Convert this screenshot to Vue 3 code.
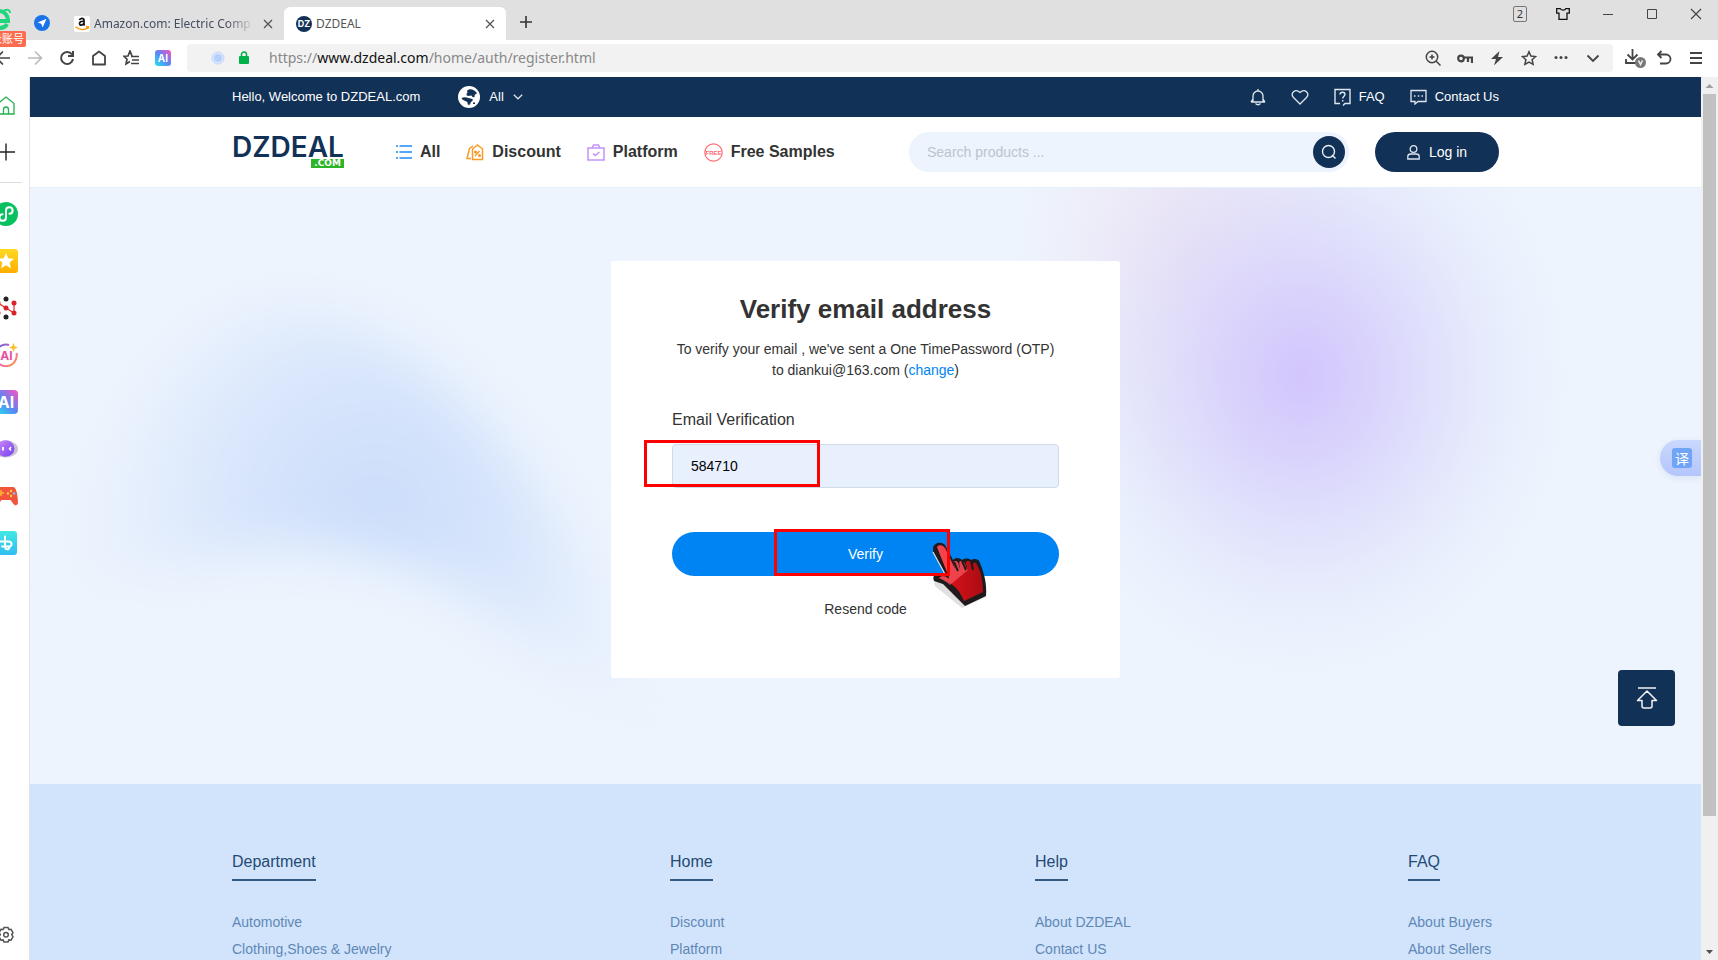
<script setup>
import { ref } from 'vue'

const code = ref('584710')
const search = ref('')
const address = { scheme: 'https://', host: 'www.dzdeal.com', path: '/home/auth/register.html' }
const columns = [
  { title: 'Department', links: ['Automotive', 'Clothing,Shoes & Jewelry'] },
  { title: 'Home', links: ['Discount', 'Platform'] },
  { title: 'Help', links: ['About DZDEAL', 'Contact US'] },
  { title: 'FAQ', links: ['About Buyers', 'About Sellers'] },
]
</script>

<template>
  <div class="browser">
    <header class="tabs">
      <div class="account">
        <svg class="account-logo" width="24" height="22" viewBox="0 0 24 22" fill="none" stroke="#1fd67c" stroke-width="4">
          <path d="M2 13h18c0-6-4-10-9-10S2 7 2 12s4 8 9 8c4 0 7-2 8-4" />
          <path d="M14 4c4-3 8-3 8 1" stroke-width="2" />
        </svg>
        <span class="account-tag">登录账号</span>
      </div>
      <button class="plain send" aria-label="Quick send">
        <svg width="16" height="16" viewBox="0 0 16 16"><circle cx="8" cy="8" r="8" fill="#1a73e8" /><path d="M12.5 3.8 3.6 7.6l3.7 1.2 1.4 3.7z" fill="#fff" /></svg>
      </button>
      <div class="tab">
        <svg width="16" height="16" viewBox="0 0 16 16">
          <rect width="16" height="16" rx="2" fill="#fff" />
          <path d="M5.5 4.2C6 1.8 10 1.6 10 4.4v3.8c0 .8.8 1 .8 1M10 5.3c-3-.2-4.5.5-4.5 2.2 0 2.2 3.5 2.2 4.5-.4" fill="none" stroke="#111" stroke-width="1.7" />
          <path d="M1.5 10.8c4 3.4 9 3.4 12.4.8M12 10.6l2.4.2-.8 2.2" fill="none" stroke="#ff9900" stroke-width="1.5" />
        </svg>
        <span class="tab-title faded">Amazon.com: Electric Comp</span>
        <button class="plain close" aria-label="Close Amazon tab"><svg width="10" height="10" viewBox="0 0 10 10" stroke="#555" stroke-width="1.3"><path d="m1 1 8 8M9 1 1 9" /></svg></button>
      </div>
      <div class="tab active">
        <span class="dz">DZ</span>
        <span class="tab-title">DZDEAL</span>
        <button class="plain close" aria-label="Close DZDEAL tab"><svg width="10" height="10" viewBox="0 0 10 10" stroke="#555" stroke-width="1.3"><path d="m1 1 8 8M9 1 1 9" /></svg></button>
      </div>
      <button class="plain new-tab" aria-label="New tab"><svg width="12" height="12" viewBox="0 0 12 12" stroke="#333" stroke-width="1.6"><path d="M6 0v12M0 6h12" /></svg></button>
      <div class="window-tools">
        <span class="tab-count">2</span>
        <button class="plain" aria-label="Skins"><svg width="14" height="12" viewBox="0 0 14 12" fill="none" stroke="#111" stroke-width="1.3"><path d="M.7.7h3.500c.5 1.800 5 1.800 5.600 0h3.500v4.500H11v6.100H3V5.200H.7z" /></svg></button>
        <button class="plain" aria-label="Minimise"><svg width="12" height="12" viewBox="0 0 12 12" stroke="#444"><path d="M1 6.500h10" /></svg></button>
        <button class="plain" aria-label="Maximise"><svg width="12" height="12" viewBox="0 0 12 12" fill="none" stroke="#444"><path d="M1.500 1.500h9v9h-9z" /></svg></button>
        <button class="plain" aria-label="Close window"><svg width="12" height="12" viewBox="0 0 12 12" stroke="#444" stroke-width="1.200"><path d="m1 1 10 10M11 1 1 11" /></svg></button>
      </div>
    </header>

    <nav class="toolbar">
      <div class="tool-left">
        <button class="plain" aria-label="Back"><svg width="16" height="16" viewBox="0 0 16 16" fill="none" stroke="#444" stroke-width="1.700"><path d="M15 8H2M8 1.500 1.500 8 8 14.500" /></svg></button>
        <button class="plain" aria-label="Forward"><svg width="16" height="16" viewBox="0 0 16 16" fill="none" stroke="#bbb" stroke-width="1.700"><path d="M1 8h13M8 1.500 14.500 8 8 14.500" /></svg></button>
        <button class="plain" aria-label="Reload"><svg width="16" height="16" viewBox="0 0 16 16" fill="none" stroke="#444" stroke-width="2"><path d="M13 4.500A6 6 0 1 0 14 9M14 1v5H9" /></svg></button>
        <button class="plain" aria-label="Home"><svg width="16" height="16" viewBox="0 0 16 16" fill="none" stroke="#444" stroke-width="1.800" stroke-linejoin="round"><path d="M2 6 8 1.500 14 6v8.500H2z" /></svg></button>
        <button class="plain" aria-label="Favourites"><svg width="16" height="16" viewBox="0 0 16 16" fill="none" stroke="#444" stroke-width="1.700"><path d="M9 6 7 1 5 6 .8 6.200l3.200 3L3 14l4-2.500M8 6.500h8M9 10h7M8 13.500h8" /></svg></button>
        <button class="plain" aria-label="AI assistant"><svg width="16" height="16" viewBox="0 0 16 16"><rect width="16" height="16" rx="3" fill="url(#aiFill)" /><text x="8" y="12" text-anchor="middle" class="ai-glyph">AI</text></svg></button>
      </div>
      <div class="address">
        <svg width="14" height="14" viewBox="0 0 14 14"><circle cx="7" cy="7" r="6" fill="#dce8fd" stroke="#c0d6fc" /><circle cx="7" cy="7" r="4" fill="#b6d0fb" /></svg>
        <svg class="lock" width="12" height="14" viewBox="0 0 12 14"><rect x="1" y="5" width="10" height="8" rx="1" fill="#00b248" /><path d="M3.500 6V3.500a2.500 2.500 0 0 1 5 0V6" fill="none" stroke="#00b248" stroke-width="1.500" /></svg>
        <span class="url">{{ address.scheme }}<b>{{ address.host }}</b>{{ address.path }}</span>
        <div class="address-tools">
          <button class="plain" aria-label="Zoom in"><svg width="16" height="16" viewBox="0 0 16 16" fill="none" stroke="#444" stroke-width="1.500"><circle cx="7" cy="7" r="5.700" /><path d="m11 11 4.500 4.500M4.500 7h5M7 4.500v5" /></svg></button>
          <button class="plain" aria-label="Passwords"><svg width="16" height="16" viewBox="0 0 16 16" fill="none" stroke="#444" stroke-width="2.200"><circle cx="4" cy="8.500" r="2.800" /><path d="M7 7.500h9M11 7.500V12M15 7.500V13" /></svg></button>
          <button class="plain" aria-label="Speed mode"><svg width="16" height="16" viewBox="0 0 16 16"><path d="M10.500 1 2 9h5l-2 6.500L14 7H9z" fill="#444" /></svg></button>
          <button class="plain" aria-label="Bookmark"><svg width="16" height="16" viewBox="0 0 16 16" fill="none" stroke="#444" stroke-width="1.500"><path d="m8 1.800 1.900 4.300 4.700.5-3.500 3.100 1 4.600L8 12l-4.100 2.300 1-4.600-3.500-3.100 4.700-.5z" /></svg></button>
          <button class="plain" aria-label="More"><svg width="16" height="16" viewBox="0 0 16 16" fill="#444"><circle cx="3" cy="7.500" r="1.500" /><circle cx="8" cy="7.500" r="1.500" /><circle cx="13" cy="7.500" r="1.500" /></svg></button>
          <button class="plain" aria-label="Expand"><svg width="16" height="16" viewBox="0 0 16 16" fill="none" stroke="#444" stroke-width="1.800"><path d="m2.500 5.500 5.500 5.500 5.500-5.500" /></svg></button>
        </div>
      </div>
      <div class="tool-right">
        <button class="plain" aria-label="Downloads"><svg width="22" height="20" viewBox="0 0 22 20" fill="none" stroke="#444" stroke-width="1.800"><path d="M7.500 1v10M2.500 6.500l5 5 5-5M1 11v4h10" /><circle cx="15.500" cy="14.500" r="5.500" fill="#777" stroke="none" /><path d="m13.500 12.500 2 4 2-4" stroke="#eee" stroke-width="1.600" /></svg></button>
        <button class="plain" aria-label="Undo"><svg width="16" height="16" viewBox="0 0 16 16" fill="none" stroke="#444" stroke-width="1.800"><path d="M2 4.500h8a4.500 4.500 0 0 1 0 9H4M5.500 1 2 4.500 5.500 8" /></svg></button>
        <button class="plain" aria-label="Menu"><svg width="12" height="14" viewBox="0 0 12 14" stroke="#444" stroke-width="2"><path d="M0 2h12M0 7h12M0 12h12" /></svg></button>
      </div>
    </nav>

    <div class="body">
      <aside class="rail">
        <a href="#" aria-label="Start page"><svg width="24" height="24" viewBox="0 0 24 24" fill="none" stroke="#22b14c" stroke-width="1.300"><path d="M4 10.500 12 4l8 6.500V21H4zM9.500 21v-4.500a2.500 2.500 0 0 1 5 0V21" /></svg></a>
        <button class="plain" aria-label="Add app"><svg width="24" height="24" viewBox="0 0 24 24" stroke="#222" stroke-width="1.400"><path d="M12 3.500v17M3 12h18" /></svg></button>
        <hr />
        <a href="#" aria-label="Mini programs"><svg width="24" height="24" viewBox="0 0 24 24"><circle cx="12" cy="12" r="12" fill="#07c160" /><path d="M12 9v6.500a3.300 3.300 0 1 1-3.500-3.300M12 15V8.500a3.300 3.300 0 1 1 3.500 3.300" fill="none" stroke="#fff" stroke-width="2" stroke-linecap="round" /></svg></a>
        <a href="#" aria-label="Starred"><svg width="24" height="24" viewBox="0 0 24 24"><rect width="24" height="24" rx="3" fill="url(#gold)" /><path d="m12 4 2.300 5.200 5.700.6-4.300 3.800 1.200 5.600-4.900-2.900-4.900 2.900 1.200-5.600L4 9.800l5.700-.6z" fill="#fff" /></svg></a>
        <a href="#" aria-label="Network"><svg width="24" height="24" viewBox="0 0 24 24" stroke="#e02b2b" stroke-width="1.200"><path d="M4 7v10M4 7l8 5 8 5V7" fill="none" /><g stroke="none"><circle cx="12" cy="3" r="2.500" fill="#222" /><circle cx="12" cy="21" r="2.500" fill="#222" /><g fill="#d8232a"><circle cx="12" cy="12" r="2.500" /><circle cx="20" cy="7" r="2.500" /><circle cx="20" cy="17" r="2.500" /><circle cx="4" cy="7" r="2.500" /><circle cx="4" cy="17" r="2.500" /></g></g></svg></a>
        <a href="#" aria-label="AI studio"><svg width="24" height="24" viewBox="0 0 24 24"><path d="M15 2A10.800 10.800 0 1 0 22.500 10" fill="none" stroke="url(#ring)" stroke-width="2" /><text x="12.500" y="16.500" text-anchor="middle" class="ai-pink">AI</text><path d="M19.500 0l1.300 3.200L24 4.500l-3.200 1.300L19.500 9l-1.300-3.200L15 4.500l3.200-1.300z" fill="#f8c12d" /></svg></a>
        <a href="#" aria-label="AI tools"><svg width="24" height="24" viewBox="0 0 24 24"><rect width="24" height="24" rx="4" fill="url(#aiFill)" /><text x="12" y="17.500" text-anchor="middle" class="ai-large">AI</text></svg></a>
        <a href="#" aria-label="Robot"><svg width="24" height="24" viewBox="0 0 24 24"><ellipse cx="12" cy="12" rx="12" ry="8.500" fill="#c9c5d2" /><ellipse cx="11.500" cy="11.500" rx="9" ry="8.200" fill="url(#robot)" /><path d="M9 10v3.500" stroke="#fff" stroke-width="1.800" /><path d="m17 10-1.500 1.700L17 13.500" fill="none" stroke="#fff" stroke-width="1.500" /></svg></a>
        <a href="#" aria-label="Games"><svg width="24" height="24" viewBox="0 0 24 24"><path d="M5 3h14c3 0 4.500 6 5 15 0 4-3 4-4.500 2l-3-4h-9l-3 4c-1.500 2-4.500 2-4.500-2C.5 9 2 3 5 3z" fill="#f2543d" /><path d="M7 6v6M4 9h6" stroke="#ffb52e" stroke-width="1.500" /><g fill="#ffd23e"><circle cx="17" cy="7" r="1.200" /><circle cx="17" cy="12" r="1.200" /><circle cx="20" cy="9.500" r="1.200" fill="#6fd1ff" /><circle cx="14" cy="9.500" r="1.200" /></g></svg></a>
        <a href="#" aria-label="Health"><svg width="24" height="24" viewBox="0 0 24 24"><rect width="23" height="24" rx="3" fill="url(#teal)" /><path d="M11 5.500v9.500c0 4.500 4.500 4 4.500 1M5 10.500h9.500c4 0 4 5 .5 5H8" fill="none" stroke="#fff" stroke-width="2" stroke-linecap="round" /></svg></a>
        <button class="plain settings" aria-label="Settings"><svg width="18" height="18" viewBox="0 0 18 18" fill="none" stroke="#555" stroke-width="1.500"><path d="M7 1.500h4l.8 2 2.200-.2 2 3.400-1.300 1.800 1.300 2.300-2 3.400-2.200-.3-.8 2.100H7l-.8-2.100-2.200.3-2-3.400 1.300-2.300L2 6.700l2-3.400 2.200.2z" /><circle cx="9" cy="8.800" r="2.300" /></svg></button>
      </aside>

      <div class="page">
        <div class="topbar">
          <div class="wrap topbar-row">
            <span>Hello, Welcome to DZDEAL.com</span>
            <button class="plain region">
              <svg width="22" height="22" viewBox="0 0 22 22"><circle cx="11" cy="11" r="11" fill="#fff" /><path d="M9 5c2-3 7-2 10 2-.5 1.500-2 1-2.500 2 1 1.500-.5 3-2 2l-1-1.500-3 .5C8 9.500 8 7.500 9.500 7z" fill="#123157" /><path d="M3.500 12c3-1.500 5-.5 7 0l4 1c1 2-1.500 2.500-2 4-1 3-3 2.500-3-.5C9 15 4.500 15 3.500 12zM15 16.500h2V18h-2z" fill="#123157" /></svg>
              <span>All</span>
              <svg width="10" height="6" viewBox="0 0 10 6" fill="none" stroke="#dfe6ee" stroke-width="1.200"><path d="m.8.8 4.200 4 4.200-4" /></svg>
            </button>
            <div class="quick">
              <a href="#" aria-label="Notifications"><svg width="16" height="18" viewBox="0 0 16 18" fill="none" stroke="#dfe6ee" stroke-width="1.300"><path d="M3 14V8a5 5 0 0 1 10 0v6M1 14h14M3 11l-2 3M13 11l2 3M8 1v2M5.500 15.500q2.500 2.500 5 0" /></svg></a>
              <a href="#" aria-label="Wishlist"><svg width="18" height="16" viewBox="0 0 18 16" fill="none" stroke="#dfe6ee" stroke-width="1.300"><path d="M9 15 2.500 8.500C-1 4.500 4-1 9 3.500 14-1 19 4.500 15.500 8.500z" /></svg></a>
              <a href="#"><svg width="17" height="18" viewBox="0 0 17 18" fill="none" stroke="#dfe6ee" stroke-width="1.400"><path d="M6 15.500H1v-14h15v14h-5L9 17.500" /><path d="M6 6.500c0-3 5-3 5 0 0 1.700-2.300 1.800-2.300 4M8.700 12v1.500" /></svg>FAQ</a>
              <a href="#"><svg width="17" height="16" viewBox="0 0 17 16" fill="none" stroke="#dfe6ee" stroke-width="1.300"><path d="M5 12.500H1v-11h15v11H8L5 15z" /><path d="M4 7h1.500M7.800 7h1.500M11.500 7H13" /></svg>Contact Us</a>
            </div>
          </div>
        </div>

        <div class="header">
          <div class="wrap header-row">
            <a class="logo" href="#"><span>DZDEAL</span><small>.COM</small></a>
            <nav class="menu">
              <a href="#"><svg width="16" height="16" viewBox="0 0 16 16" stroke="#1b8df6" stroke-width="1.500"><path d="M3.500 2H16M3.500 8H16M3.500 14H16M0 2h2M0 8h2M0 14h2" /></svg>All</a>
              <a href="#"><svg width="18" height="17" viewBox="0 0 18 17" fill="none" stroke="#fb9a26" stroke-width="1.500"><path d="M6.500 5 11.500 1l5 4v10.500h-10zM7 2 3.500 4.500 1 14.500h4" /><path d="m9 12 4.500-5" /><circle cx="9.500" cy="8" r=".8" /><circle cx="13.500" cy="11.500" r=".8" /></svg>Discount</a>
              <a href="#"><svg width="18" height="17" viewBox="0 0 18 17" fill="none" stroke="#c392fb" stroke-width="1.500"><path d="M1 4h16v12H1zM5 4l1.500-3h5L13 4M6 9.500l2.300 2L12.500 8" /></svg>Platform</a>
              <a href="#"><svg width="19" height="19" viewBox="0 0 19 19"><circle cx="9.500" cy="9.500" r="8.700" fill="none" stroke="#fb6b70" stroke-width="1.200" /><text x="9.500" y="12" text-anchor="middle" class="free">FREE</text></svg>Free Samples</a>
            </nav>
            <form class="search" @submit.prevent>
              <input v-model="search" type="text" aria-label="Search products" placeholder="Search products ..." />
              <button class="plain go" aria-label="Search"><svg width="16" height="16" viewBox="0 0 16 16" fill="none" stroke="#e9eef4" stroke-width="1.400"><circle cx="7.500" cy="7.500" r="6" /><path d="m11 11 3.500 3.500" /></svg></button>
            </form>
            <button class="login"><svg width="13" height="15" viewBox="0 0 13 15" fill="none" stroke="#dfe6ee" stroke-width="1.300"><circle cx="6.500" cy="4" r="3.300" /><path d="M.8 14v-2.500c0-2 1.200-2.500 3-2.500h5.400c1.800 0 3 .5 3 2.500V14z" /></svg>Log in</button>
          </div>
        </div>

        <main class="hero">
          <svg class="glow" viewBox="0 0 1671 597" preserveAspectRatio="none" aria-hidden="true">
            <defs>
              <radialGradient id="violet"><stop offset="0" stop-color="#d2c5fd" /><stop offset=".3" stop-color="#d8d2fc" stop-opacity=".9" /><stop offset=".55" stop-color="#dcdcfb" stop-opacity=".65" /><stop offset=".8" stop-color="#e2e6fc" stop-opacity=".3" /><stop offset="1" stop-color="#e9effd" stop-opacity="0" /></radialGradient>
              <radialGradient id="rose"><stop offset="0" stop-color="#f0ddee" stop-opacity=".8" /><stop offset="1" stop-color="#f0ddee" stop-opacity="0" /></radialGradient>
              <radialGradient id="azure" gradientUnits="userSpaceOnUse" cx="345" cy="325" r="310"><stop offset="0" stop-color="#cbddfb" /><stop offset=".5" stop-color="#d9e6fc" /><stop offset="1" stop-color="#e8f1fd" stop-opacity=".4" /></radialGradient>
              <filter id="soft" x="-20%" y="-20%" width="140%" height="140%"><feGaussianBlur stdDeviation="26" /></filter>
              <linearGradient id="aiFill" x1="0" y1="1" x2="1" y2="0"><stop offset="0" stop-color="#21e6ea" /><stop offset=".5" stop-color="#5a86f5" /><stop offset="1" stop-color="#ff4fc0" /></linearGradient>
              <linearGradient id="gold" x1="0" y1="0" x2="0" y2="1"><stop offset="0" stop-color="#ffd921" /><stop offset="1" stop-color="#ffae00" /></linearGradient>
              <linearGradient id="ring" x1="0" y1="0" x2="1" y2="1"><stop offset="0" stop-color="#5b62e8" /><stop offset=".6" stop-color="#f763a2" /><stop offset="1" stop-color="#f8a73c" /></linearGradient>
              <linearGradient id="robot" x1="0" y1="0" x2="1" y2="1"><stop offset="0" stop-color="#d08cf8" /><stop offset="1" stop-color="#743df0" /></linearGradient>
              <linearGradient id="teal" x1="0" y1="0" x2="0" y2="1"><stop offset="0" stop-color="#42e8e2" /><stop offset="1" stop-color="#31bdf2" /></linearGradient>
              <linearGradient id="handRed" x1="0" y1="0" x2="1" y2="0"><stop offset="0" stop-color="#e8141d" /><stop offset="1" stop-color="#ab0c13" /></linearGradient>
            </defs>
            <path d="M50 385C80 220 160 120 260 120 380 130 480 250 540 350 590 430 630 520 650 570 560 510 500 455 430 405 360 365 280 350 190 370 140 382 90 392 50 385Z" fill="url(#azure)" filter="url(#soft)" />
            <ellipse cx="1165" cy="70" rx="175" ry="250" fill="url(#rose)" />
            <ellipse cx="1272" cy="188" rx="275" ry="310" fill="url(#violet)" />
          </svg>

          <form class="card" @submit.prevent>
            <h1>Verify email address</h1>
            <p>To verify your email , we've sent a One TimePassword (OTP)<br />to diankui@163.com (<a href="#">change</a>)</p>
            <label for="code">Email Verification</label>
            <div class="field">
              <input id="code" v-model="code" type="text" />
              <span class="mark mark-code"></span>
            </div>
            <div class="action">
              <button class="verify">Verify</button>
              <svg class="hand" width="58" height="66" viewBox="0 0 58 66">
                <path d="M3 9 14 32 6 37c-3 3-3 5-2 7l27 22 24-11z" fill="#999" opacity=".3" />
                <path d="M2 6C3 1 10-1 14 3l8 15c3-3 7-2 9 0 3-2 7-2 9 0 4-2 8-1 9 3 4 10 7 20 6 33L34 64 12 42 3 39c-2-5 1-8 6-8h5L2 10z" fill="#1f1b1c" />
                <path d="M6 5c2-3 6-2 8 1l10 21c0-3-3-8 0-8 4 0 3 4 5 8 0-4-2-8 1-8 4 0 4 4 6 8 0-4-3-8 1-8 4 0 4 3 6 8-1-4-2-7 2-6 5 8 7 19 7 29L33 59C28 46 20 40 8 36c3-3 7-2 10 1 0-3-1-5-2-7z" fill="url(#handRed)" />
                <path d="M6 5c2-3 6-2 8 1l10 21c0-3-3-8 0-8 4 0 3 4 5 8 0-4-2-8 1-8 4 0 4 4 6 8l1 1L19 43c-3-3-7-5-11-7 3-3 7-2 10 1 0-3-1-5-2-7z" fill="#ff6570" opacity=".6" />
                <path d="m2 10 13 24" stroke="#ddd" stroke-width="1.200" />
                <path d="m23 20 4 9M31 19l4 9M40 19l2 9" stroke="#1f1b1c" stroke-width="2" fill="none" />
              </svg>
              <span class="mark mark-verify"></span>
            </div>
            <button class="plain resend" type="button">Resend code</button>
          </form>
        </main>

        <footer class="footer">
          <div class="wrap footer-grid">
            <section v-for="column in columns" :key="column.title">
              <h2>{{ column.title }}</h2>
              <a v-for="link in column.links" :key="link" href="#">{{ link }}</a>
            </section>
          </div>
        </footer>

        <button class="plain translate" aria-label="Translate"><span>译</span></button>
        <button class="plain to-top" aria-label="Back to top"><svg width="22" height="24" viewBox="0 0 22 24" fill="none" stroke="#f1f4f8" stroke-width="1.500" stroke-linejoin="round"><path d="M2 2h18M11 5 1.500 14.500H6V20q0 2 2 2h6q2 0 2-2v-5.500h4.500z" /></svg></button>
      </div>

      <div class="scrollbar" aria-hidden="true">
        <svg width="17" height="17" viewBox="0 0 17 17" fill="#a0a0a0"><path d="m8.500 7 4 4h-8z" /></svg>
        <div class="track"><div class="thumb"></div></div>
        <svg width="17" height="17" viewBox="0 0 17 17" fill="#505050"><path d="m8.500 11-3.500-4h7z" /></svg>
      </div>
    </div>
  </div>
</template>

<style>
body { margin: 0; overflow: hidden; }
</style>

<style scoped>
* { box-sizing: border-box; }
.browser { display: flex; flex-direction: column; height: 100vh; overflow: hidden; background: #fff; color: #333; font: 14px/20px "Liberation Sans", Arial, "Noto Sans CJK SC", sans-serif; }
a { color: inherit; text-decoration: none; }
svg { display: block; flex: none; }
.plain { display: block; flex: none; padding: 0; border: 0; background: none; color: inherit; font: inherit; cursor: pointer; }

.tabs { display: flex; flex: none; height: 40px; background: #e0e0e0; font: 13px/20px "Noto Sans", "Noto Sans CJK SC", sans-serif; color: #555; }
.account { position: relative; z-index: 1; flex: none; display: flex; flex-direction: column; align-items: flex-end; width: 40px; height: 47px; margin-left: -14px; padding: 8px 0 0; }
.account-logo { margin-right: 14px; }
.account-tag { flex: none; margin-top: 1px; padding: 0 2px; border-radius: 2px; background: #ff6b4e; color: #fff; font-size: 11px; line-height: 16px; white-space: nowrap; }
.send { align-self: center; margin: 6px 0 0 8px; }
.tab { display: flex; align-items: center; width: 222px; height: 33px; margin-top: 7px; padding: 0 11px 0 12px; gap: 4px; }
.tab:not(.active) { margin-left: 12px; }
.tab.active { border-radius: 6px 6px 0 0; background: #fff; }
.tab-title { flex: 1; overflow: hidden; font-size: 12px; white-space: nowrap; }
.faded { color: #464c62; mask-image: linear-gradient(90deg, #000 82%, transparent 100%); }
.close { margin-left: 4px; }
.dz { flex: none; width: 16px; height: 16px; border-radius: 50%; background: #123157; color: #fff; font: 700 9px/16px Inter, sans-serif; text-align: center; }
.new-tab { align-self: center; margin: 4px 0 0 14px; }
.window-tools { display: flex; align-items: center; gap: 32px; height: 28px; margin-left: auto; padding-right: 16px; }
.tab-count { width: 14px; height: 16px; margin-right: -3px; border: 1px solid #777; border-radius: 2px; color: #333; font-size: 11px; line-height: 14px; text-align: center; }

.toolbar { display: flex; flex: none; align-items: center; height: 37px; padding-bottom: 1px; }
.tool-left { display: flex; gap: 16px; width: 192px; margin-left: -5px; }
.address { display: flex; flex: 1; align-items: center; height: 28px; padding: 0 12px 0 24px; border-radius: 4px; background: #f2f2f2; }
.lock { margin: 0 19px 0 13px; }
.url { color: #888; font: 14px/20px "Noto Sans", sans-serif; }
.url b { color: #111; font-weight: 400; }
.address-tools { display: flex; gap: 16px; margin-left: auto; }
.tool-right { display: flex; align-items: center; gap: 18px; padding: 0 16px 0 12px; }
.tool-right > :first-child { margin-right: -9px; }
.ai-glyph { fill: #fff; font: 700 10px Inter, sans-serif; }
.ai-large { fill: #fff; font: 700 16px Inter, sans-serif; }
.ai-pink { fill: #e94f9b; font: 700 12px Inter, sans-serif; }

.body { display: flex; flex: 1; min-height: 0; }
.rail { display: flex; flex: none; flex-direction: column; align-items: center; gap: 23px; width: 47px; margin-left: -17px; padding: 16px 1px 16px 0; border-right: 1px solid #e3e3e3; background: #fff; }
.rail hr { width: 32px; margin: -5px 0 -4px; border: 0; border-top: 1px solid #ddd; }
.settings { margin-top: auto; }

.page { position: relative; display: flex; flex: 1; flex-direction: column; min-width: 0; overflow: hidden; }
.wrap { margin: 0 202px; }
.topbar { flex: none; background: #123157; color: #fff; font-size: 13px; }
.topbar-row { display: flex; align-items: center; height: 40px; }
.region { display: flex; align-items: center; gap: 9px; margin-left: 38px; }
.quick { display: flex; align-items: center; gap: 25px; margin-left: auto; }
.quick a { display: flex; align-items: center; gap: 8px; }

.header { flex: none; border-bottom: 1px solid #e6eef8; background: #fff; }
.header-row { display: flex; align-items: center; height: 70px; }
.logo { display: flex; flex-direction: column; align-items: flex-end; gap: 2px; color: #123157; }
.logo span { font: 600 28px/20px Inter, sans-serif; }
.logo small { padding: 0 3px; background: #2db528; color: #fff; font: 700 9px/9px "DejaVu Sans", sans-serif; }
.menu { display: flex; gap: 26px; margin-left: 52px; color: #333; font-size: 16px; font-weight: 700; }
.menu a { display: flex; align-items: center; gap: 8px; white-space: nowrap; }
.free { fill: #fb6b70; font: 700 6px "Liberation Sans", sans-serif; }
.search { display: flex; align-items: center; width: 440px; height: 40px; margin-left: auto; padding: 0 4px 0 18px; border-radius: 20px; background: #edf4fd; }
.search input { flex: 1; min-width: 0; padding: 0; border: 0; outline: 0; background: none; font: inherit; }
.search input::placeholder { color: #bcc4ce; opacity: 1; }
.go { display: grid; place-items: center; width: 32px; height: 32px; border-radius: 50%; background: #123157; }
.login { display: flex; align-items: center; justify-content: center; gap: 9px; width: 124px; height: 40px; margin-left: 26px; padding: 0; border: 0; border-radius: 20px; background: #123157; color: #fff; font: inherit; }

.hero { position: relative; flex: none; padding: 73px 0 106px; background: #edf4fd; }
.glow { position: absolute; inset: 0; width: 100%; height: 100%; }
.card { position: relative; display: flex; flex-direction: column; width: 509px; margin: 0 auto; padding: 30px 61px 59px; border-radius: 3px; background: #fff; }
.card h1 { margin: 0 0 12px; font-size: 26px; line-height: 36px; text-align: center; }
.card p { margin: 0 -20px; line-height: 21px; text-align: center; }
.card p a { color: #0084f4; }
.card label { margin: 27px 0 12px; font-size: 16px; line-height: 24px; }
.field, .action { position: relative; }
.field input { display: block; width: 100%; height: 44px; padding: 0 18px; border: 1px solid #d0dbe8; border-radius: 4px; outline: 0; background: #e8f0fe; color: #000; font: inherit; }
.action { margin: 44px 0 23px; }
.verify { display: block; width: 100%; height: 44px; padding: 0; border: 0; border-radius: 22px; background: #0084f4; color: #fff; font: inherit; }
.resend { align-self: center; }
.mark { position: absolute; width: 176px; height: 47px; border: 3px solid #f00; pointer-events: none; }
.mark-code { top: -4px; left: -28px; }
.mark-verify { top: -3px; left: 102px; }
.hand { position: absolute; top: 10px; left: 259px; }

.footer { flex: 1 0 auto; padding-top: 66px; background: #d2e4fc; }
.footer-grid { display: grid; grid-template-columns: 438fr 365fr 373fr 91fr; }
.footer section { display: flex; flex-direction: column; align-items: flex-start; }
.footer h2 { margin: 0 0 28px; padding-bottom: 5px; border-bottom: 2px solid #355b83; color: #234a73; font-size: 16px; font-weight: 400; line-height: 24px; }
.footer a { color: #5f88b5; line-height: 27px; white-space: nowrap; }

.translate { position: absolute; top: 363px; right: 0; width: 41px; height: 36px; padding-left: 12px; border-radius: 18px 0 0 18px; background: linear-gradient(#c9d8fd, #b3c6fd); box-shadow: 0 2px 6px #b8c8e866; }
.translate span { display: block; width: 20px; height: 20px; border-radius: 3px; background: #70a4f6; color: #fff; font: 14px/20px "Noto Sans CJK SC", sans-serif; text-align: center; }
.to-top { position: absolute; top: 593px; right: 26px; display: grid; place-items: center; width: 57px; height: 56px; border-radius: 4px; background: #123157; }

.scrollbar { display: flex; flex: none; flex-direction: column; width: 17px; background: #f0f0f0; }
.track { flex: 1; padding: 0 2px; }
.thumb { height: 85%; background: #c1c1c1; }
</style>
